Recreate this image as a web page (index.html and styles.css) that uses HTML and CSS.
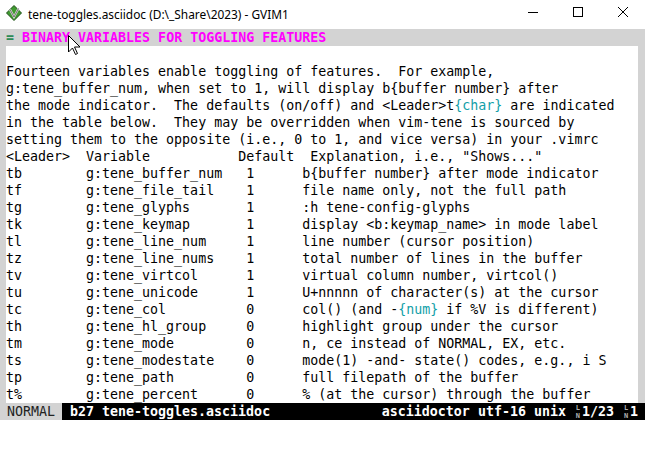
FILE: index.html
```html
<!DOCTYPE html>
<html>
<head>
<meta charset="utf-8">
<link rel="stylesheet" href="styles.css">
</head>
<body>
<div class="titlebar">
  <svg class="appicon" width="16" height="16" viewBox="0 0 16 16">
    <polygon points="8,0.5 15.5,8 8,15.5 0.5,8" fill="#3f9b2f" stroke="#1d4d17" stroke-width="1"/>
    <polyline points="4,4.5 8,12 12.5,3.5" fill="none" stroke="#d8d8d8" stroke-width="2.2"/>
    <polyline points="4,4.5 8,12 12.5,3.5" fill="none" stroke="#333" stroke-width="0.6"/>
  </svg>
  <span class="title">tene-toggles.asciidoc (D:\_Share\2023) - GVIM1</span>
  <div class="controls">
    <div class="btn"><svg width="10" height="10" viewBox="0 0 10 10"><line x1="0" y1="5.5" x2="10" y2="5.5" stroke="#000" stroke-width="1"/></svg></div>
    <div class="btn"><svg width="10" height="10" viewBox="0 0 10 10"><rect x="0.5" y="0.5" width="9" height="9" fill="none" stroke="#000" stroke-width="1"/></svg></div>
    <div class="btn"><svg width="10" height="10" viewBox="0 0 10 10"><line x1="0" y1="0" x2="10" y2="10" stroke="#000" stroke-width="1"/><line x1="10" y1="0" x2="0" y2="10" stroke="#000" stroke-width="1"/></svg></div>
  </div>
</div>
<div class="editor">
  <div class="heading"><span class="eq">=</span> <span class="htext">BINARY VARIABLES FOR TOGGLING FEATURES</span></div>
  <div class="buffer">
    <div class="page">
      <div class="line"> </div>
      <div class="line">Fourteen variables enable toggling of features.  For example,</div>
      <div class="line">g:tene_buffer_num, when set to 1, will display b{buffer number} after</div>
      <div class="line">the mode indicator.  The defaults (on/off) and &lt;Leader&gt;t<span class="teal">{char}</span> are indicated</div>
      <div class="line">in the table below.  They may be overridden when vim-tene is sourced by</div>
      <div class="line">setting them to the opposite (i.e., 0 to 1, and vice versa) in your .vimrc</div>
      <div class="line">&lt;Leader&gt;  Variable           Default  Explanation, i.e., "Shows..."</div>
      <div class="line">tb        g:tene_buffer_num   1      b{buffer number} after mode indicator</div>
      <div class="line">tf        g:tene_file_tail    1      file name only, not the full path</div>
      <div class="line">tg        g:tene_glyphs       1      :h tene-config-glyphs</div>
      <div class="line">tk        g:tene_keymap       1      display &lt;b:keymap_name&gt; in mode label</div>
      <div class="line">tl        g:tene_line_num     1      line number (cursor position)</div>
      <div class="line">tz        g:tene_line_nums    1      total number of lines in the buffer</div>
      <div class="line">tv        g:tene_virtcol      1      virtual column number, virtcol()</div>
      <div class="line">tu        g:tene_unicode      1      U+nnnnn of character(s) at the cursor</div>
      <div class="line">tc        g:tene_col          0      col() (and -<span class="teal">{num}</span> if %V is different)</div>
      <div class="line">th        g:tene_hl_group     0      highlight group under the cursor</div>
      <div class="line">tm        g:tene_mode         0      n, ce instead of NORMAL, EX, etc.</div>
      <div class="line">ts        g:tene_modestate    0      mode(1) -and- state() codes, e.g., i S</div>
      <div class="line">tp        g:tene_path         0      full filepath of the buffer</div>
      <div class="line">t%        g:tene_percent      0      % (at the cursor) through the buffer</div>
    </div>
  </div>
  <div class="status">
    <div class="mode">NORMAL</div>
    <div class="file">b27 tene-toggles.asciidoc</div>
    <div class="right">asciidoctor utf-16 unix <span class="ln"><span class="ln-top">L</span><span class="ln-bot">N</span></span>1/23 <span class="ln"><span class="ln-top">L</span><span class="ln-bot">N</span></span>1</div>
  </div>
  <div class="cmdline"></div>
</div>
<svg class="mouse" width="13" height="21" viewBox="0 0 13 21">
  <polygon points="0.5,0.5 0.5,17 4.5,13 7.5,19.5 9.5,18.5 6.5,12 12,12" fill="#fff" stroke="#000" stroke-width="1" stroke-linejoin="miter"/>
</svg>
</body>
</html>
```
FILE: styles.css
```css
html, body {
  margin: 0;
  padding: 0;
  background: #fff;
  width: 645px;
  height: 453px;
  overflow: hidden;
}
body {
  position: relative;
}
.titlebar {
  height: 29px;
  display: flex;
  align-items: center;
  background: #fff;
}
.appicon {
  margin-left: 6px;
  margin-top: -3px;
  flex: none;
}
.title {
  margin-left: 6px;
  font-family: "Noto Sans", "DejaVu Sans", sans-serif;
  font-size: 11.9px;
  color: #000;
  margin-top: -2px;
  white-space: nowrap;
}
.controls {
  margin-left: auto;
  display: flex;
  height: 29px;
}
.btn {
  width: 45px;
  height: 29px;
  display: flex;
  align-items: center;
  justify-content: center;
  margin-top: -3px;
}
.editor {
  font-family: "DejaVu Sans Mono", monospace;
  font-size: 13.3px;
  line-height: 17px;
  color: #000;
}
.heading {
  height: 17px;
  background: #d3d3d3;
  padding-left: 6px;
  white-space: pre;
}
.eq {
  color: #2e8b57;
  font-weight: bold;
}
.htext {
  color: #ff00ff;
  font-weight: bold;
}
.buffer {
  background: #d3d3d3;
  padding: 0 7px 0 6px;
}
.page {
  background: #fff;
}
.line {
  height: 17px;
  white-space: pre;
}
.teal {
  color: #12a0a8;
}
.status {
  height: 17px;
  display: flex;
  background: #000;
  color: #fff;
  white-space: pre;
}
.mode {
  width: 55px;
  padding-left: 7px;
  background: #d3d3d3;
  color: #222;
}
.file {
  flex: 1;
  padding-left: 8px;
  font-weight: bold;
}
.right {
  padding-right: 7px;
  font-weight: bold;
  display: flex;
  align-items: stretch;
}
.ln {
  width: 8px;
  height: 17px;
  display: inline-flex;
  flex-direction: column;
  align-items: center;
  color: #b0b0b0;
  font-weight: bold;
  font-size: 7px;
  line-height: 8px;
  padding-top: 1px;
  box-sizing: border-box;
}
.ln-top {
  display: block;
  height: 8px;
}
.ln-bot {
  display: block;
  height: 8px;
}
.cmdline {
  height: 33px;
  background: #fff;
}
.mouse {
  position: absolute;
  left: 68px;
  top: 35px;
}
```
